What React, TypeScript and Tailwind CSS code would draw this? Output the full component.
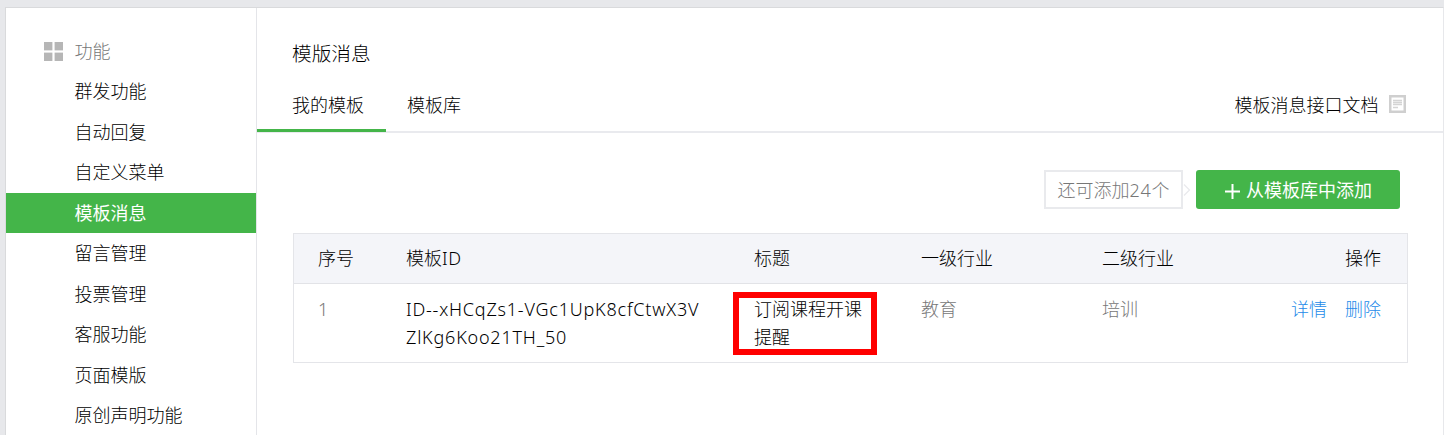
const menuItems = [
  '群发功能',
  '自动回复',
  '自定义菜单',
  '模板消息',
  '留言管理',
  '投票管理',
  '客服功能',
  '页面模版',
  '原创声明功能',
];

function GridIcon() {
  return (
    <svg width="19" height="19" viewBox="0 0 19 19" fill="#b6b6b6" className="mt-px mr-3 shrink-0">
      <rect x="0" y="0" width="8.4" height="8.4" />
      <rect x="10.6" y="0" width="8.4" height="8.4" />
      <rect x="0" y="10.6" width="8.4" height="8.4" />
      <rect x="10.6" y="10.6" width="8.4" height="8.4" />
    </svg>
  );
}

function DocIcon() {
  return (
    <svg width="17" height="18" viewBox="0 0 17 18" fill="none" className="ml-[10px] shrink-0">
      <rect x="1.25" y="1.25" width="14.5" height="15.5" fill="#fff" stroke="#cfcfcf" strokeWidth="2.5" />
      <path d="M4 5.5h9M4 7.5h9M4 9.5h9M4 12.5h5" stroke="#d4d4d4" strokeWidth="1.4" />
    </svg>
  );
}

function Sidebar() {
  return (
    <nav className="w-[251px] shrink-0 border-r border-[#e4e5e9] pt-[22.5px]">
      <div className="flex h-[40.5px] items-center pl-[38px] text-[#777]">
        <GridIcon />
        <span className="-ml-[0.5px]">功能</span>
      </div>
      {menuItems.map((item) => (
        <div
          key={item}
          className={`flex h-[40.5px] items-center pl-[68.5px] ${
            item === '模板消息' ? 'bg-[#44b549] font-normal text-white' : ''
          }`}
        >
          {item}
        </div>
      ))}
    </nav>
  );
}

const columns =
  'grid grid-cols-[88px_348px_167px_181px_1fr_auto] pl-6 pr-[26px]';

export default function App() {
  return (
    <div className="h-[435px] overflow-hidden bg-[#e7e8eb] pl-[5px] pt-[7px] font-['Noto_Sans','Noto_Sans_CJK_SC',sans-serif] text-[18px] leading-[28px] font-light text-black">
      <div className="flex h-[440px] border border-[#d9dadc] border-r-[#e7e8eb] bg-white">
        <Sidebar />
        <main className="flex min-w-0 flex-1 flex-col">
          <header className="border-b-2 border-[#e9eaee]">
            <h1 className="pt-[32px] pl-[35px] text-[19.7px] leading-[28px]">模版消息</h1>
            <div className="flex h-[62.5px] items-end justify-between">
              <div className="-mb-[1px] flex">
                <div className="h-[42px] w-[129px] border-b-[3px] border-[#44b549] pt-px pl-[35px]">我的模板</div>
                <div className="h-[42px] pt-px pl-[21px]">模板库</div>
              </div>
              <div className="flex h-[41px] items-start pr-[37px]">
                <span className="mr-[0.5px] pt-px">模板消息接口文档</span>
                <span className="pt-[5px]"><DocIcon /></span>
              </div>
            </div>
          </header>
          <div className="flex items-center justify-end pt-[37.5px] pr-[43px]">
            <div className="flex h-[39px] w-[139px] items-center justify-center border-2 border-[#e9eaed] text-[#777]">
              还可添加<span className="font-[350] tracking-[0.7px]">24</span>个
            </div>
            <svg width="12" height="14" viewBox="0 0 12 14" fill="none" className="mr-px">
              <path d="M1 1.5L6.5 7L1 12.5" stroke="#e9eaed" strokeWidth="1.3" />
            </svg>
            <button className="flex h-[39px] w-[204px] items-center rounded-[3px] bg-[#44b549] pl-[29px] font-normal text-white">
              <svg width="15" height="15" viewBox="0 0 15 15" className="mt-[3px] mr-[6px]">
                <path d="M7.5 0V15M0 7.5H15" stroke="#fff" strokeWidth="2" />
              </svg>
              从模板库中添加
            </button>
          </div>
          <div className="mt-[24px] mr-[35px] ml-[36px] border border-[#e4e5e9]">
            <div className={`${columns} h-[50px] items-center border-b border-[#e2e3e7] bg-[#f4f5f9] pb-px`}>
              <span>序号</span>
              <span>模板<span className="font-[350] tracking-[0.7px]">ID</span></span>
              <span>标题</span>
              <span>一级行业</span>
              <span>二级行业</span>
              <span>操作</span>
            </div>
            <div className={`${columns} h-[78px] pt-[11px]`}>
              <span className="font-[350] text-[#777]">1</span>
              <span className="font-[350] tracking-[0.79px]">
                ID--xHCqZs1-VGc1UpK8cfCtwX3V
                <br />
                ZlKg6Koo21TH_50
              </span>
              <span className="relative">
                订阅课程开课
                <br />
                提醒
                <span className="absolute -top-[3px] -left-[21px] h-[63px] w-[144px] border-[6px] border-[#f00]" />
              </span>
              <span className="text-[#777]">教育</span>
              <span className="text-[#777]">培训</span>
              <span className="flex gap-[18px] text-[#258be9]">
                <a>详情</a>
                <a>删除</a>
              </span>
            </div>
          </div>
        </main>
      </div>
    </div>
  );
}
